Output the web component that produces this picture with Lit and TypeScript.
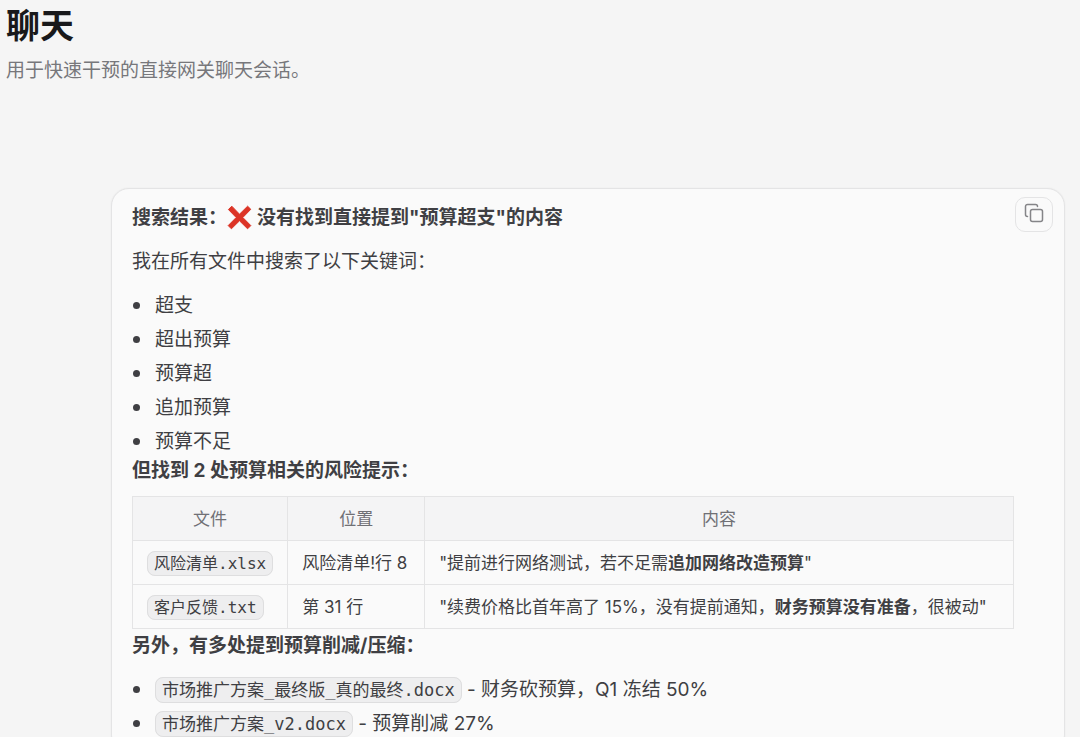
import { LitElement, html, css, svg } from "lit";
import { customElement } from "lit/decorators.js";

const keywords = ["超支", "超出预算", "预算超", "追加预算", "预算不足"];

const cuts = [
  { file: "市场推广方案_最终版_真的最终.docx", note: "财务砍预算，Q1 冻结 50%" },
  { file: "市场推广方案_v2.docx", note: "预算削减 27%" },
];

const risks = [
  { file: "风险清单.xlsx", place: "风险清单!行 8", before: '"提前进行网络测试，若不足需', strong: "追加网络改造预算", after: '"' },
  { file: "客户反馈.txt", place: "第 31 行", before: '"续费价格比首年高了 15%，没有提前通知，', strong: "财务预算没有准备", after: '，很被动"' },
];

@customElement("chat-message")
export class ChatMessage extends LitElement {
  static styles = css`
    :host {
      display: block;
      position: relative;
      box-sizing: border-box;
      padding: 14px 50px 14px 20px;
      background: #fafafa;
      border: 1px solid #e4e4e5;
      border-radius: 18px;
      box-shadow: 0 0 2px rgba(0, 0, 0, 0.06);
      color: #3f3f43;
      font-size: 19px;
      line-height: 29px;
    }
    p, ul { margin: 0; padding: 0; }
    p + p, p + ul { margin-top: 15px; }
    strong { font-weight: 700; }
    .cross {
      width: 25px;
      height: 25px;
      margin: 0 5px 0 0;
      vertical-align: -6px;
    }
    .list { list-style: none; padding-left: 23px; }
    .list li + li { margin-top: 5px; }
    .list li::before {
      content: "";
      display: inline-block;
      width: 7px;
      height: 7px;
      margin: 0 15px 0 -22px;
      border-radius: 50%;
      background: #3f3f43;
      vertical-align: 3px;
    }
    .table {
      width: 100%;
      margin: 11px 0 2px;
      border-collapse: collapse;
      font-size: 17px;
      line-height: 27px;
    }
    th, td {
      padding: 9px 14px 7px;
      border: 1px solid #e4e4e5;
      text-align: left;
      white-space: nowrap;
    }
    th {
      background: #f4f4f5;
      color: #707075;
      font-weight: 400;
      text-align: center;
    }
    th:nth-child(2) { min-width: 108px; }
    th:last-child { width: 100%; }
    code {
      padding: 2px 6px;
      border: 1px solid #dededf;
      border-radius: 8px;
      background: #eeeeef;
      font-family: "DejaVu Sans Mono", "Noto Sans CJK SC", monospace;
      font-size: 17px;
      line-height: 22px;
    }
    td code { font-size: 16px; }
    .copy {
      position: absolute;
      top: 8px;
      right: 11px;
      display: grid;
      place-items: center;
      width: 38px;
      height: 35px;
      padding: 0 0 3px;
      border: 1px solid #e4e4e5;
      border-radius: 10px;
      background: #fafafa;
      color: #858588;
      cursor: pointer;
    }
    .copy svg { display: block; }
  `;

  render() {
    return html`
      <button class="copy" type="button" aria-label="复制">
        <svg width="20" height="20" viewBox="0 0 20 20" fill="none" stroke="currentColor" stroke-width="1.5" stroke-linecap="round" stroke-linejoin="round" aria-hidden="true">
          ${svg`<rect x="6.5" y="6.5" width="12" height="12" rx="2"></rect><path d="M3.5 13.5a2 2 0 0 1-2-2v-8a2 2 0 0 1 2-2h8a2 2 0 0 1 2 2"></path>`}
        </svg>
      </button>
      <p><strong>搜索结果：<svg class="cross" viewBox="0 0 25 25" role="img" aria-label="错误">
        <path d="M4.8 1.2 12.5 9.2 20.6 1.2 23.8 4.3 15.8 12.5 23.8 20.6 20.6 23.8 12.5 15.8 4.4 23.8 1.2 20.6 9.2 12.5 1.4 4.5Z" fill="#dc3426" stroke="#dc3426" stroke-width="1" stroke-linejoin="round"></path>
      </svg>没有找到直接提到"预算超支"的内容</strong></p>
      <p>我在所有文件中搜索了以下关键词：</p>
      <ul class="list">${keywords.map((k) => html`<li>${k}</li>`)}</ul>
      <p><strong>但找到 2 处预算相关的风险提示：</strong></p>
      <table class="table">
        <thead>
          <tr><th scope="col">文件</th><th scope="col">位置</th><th scope="col">内容</th></tr>
        </thead>
        <tbody>
          ${risks.map((r) => html`<tr>
            <td><code>${r.file}</code></td>
            <td>${r.place}</td>
            <td>${r.before}<strong>${r.strong}</strong>${r.after}</td>
          </tr>`)}
        </tbody>
      </table>
      <p><strong>另外，有多处提到预算削减/压缩：</strong></p>
      <ul class="list">${cuts.map((c) => html`<li><code>${c.file}</code> - ${c.note}</li>`)}</ul>
    `;
  }
}

@customElement("app-root")
export class AppRoot extends LitElement {
  static styles = css`
    :host {
      display: block;
      height: 100vh;
      overflow: hidden;
      background: #f5f5f5;
      font-family: Inter, "Noto Sans CJK SC", sans-serif;
    }
    .head { padding: 6px 6px 0; }
    .title {
      margin: 0;
      color: #19191b;
      font-size: 34px;
      font-weight: 700;
      line-height: 40px;
    }
    .sub {
      margin: 10px 0 0;
      color: #77777b;
      font-size: 19px;
      line-height: 29px;
    }
    .thread { padding: 103px 15px 0 111px; }
  `;

  render() {
    return html`
      <header class="head">
        <h1 class="title">聊天</h1>
        <p class="sub">用于快速干预的直接网关聊天会话。</p>
      </header>
      <main class="thread"><chat-message></chat-message></main>
    `;
  }
}
